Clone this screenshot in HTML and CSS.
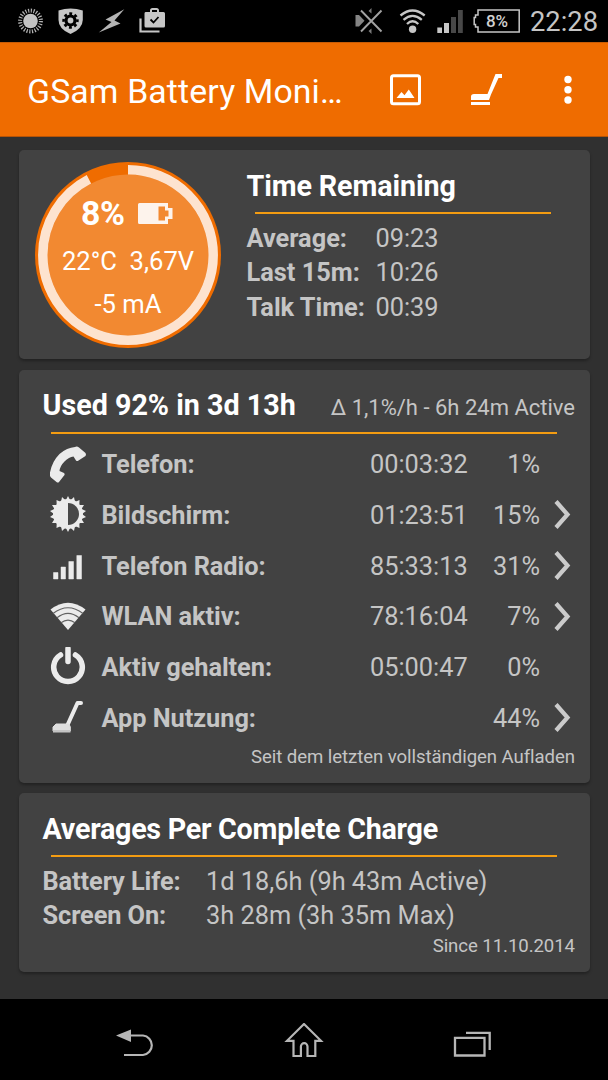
FILE: index.html
```html
<!DOCTYPE html>
<html lang="de">
<head>
  <meta charset="UTF-8">
  <meta name="viewport" content="width=device-width, initial-scale=1.0">
  <title>GSam Battery Monitor</title>
  <link rel="stylesheet" href="styles.css">
</head>
<body>
  <div class="screen">
    <!-- Status bar -->
    <div class="status-bar">
      <svg class="status-icons-left" width="170" height="42" viewBox="0 0 170 42">
        <circle cx="30.5" cy="21" r="7.3" fill="#c4c4c4"/>
        <circle cx="30.5" cy="21" r="10.4" fill="none" stroke="#b4b4b4" stroke-width="4" stroke-dasharray="1.2 1.52"/>
        <path d="M58.5 10.5Q70.5 6.5 82.800 10.500V20Q82.500 29 70.500 34Q58.500 29 58.500 20Z" fill="#c6c6c6"/>
        <circle cx="70.500" cy="20.500" r="4.500" fill="none" stroke="#000" stroke-width="3.200"/>
        <circle cx="70.500" cy="20.500" r="6.900" fill="none" stroke="#000" stroke-width="2.600" stroke-dasharray="2.900 2.519" stroke-dashoffset="1.450"/>
        <path d="M124.300 9.300L105.500 19.500L111.500 22L98.800 32.500L120.500 23.500L114.500 20.500Z" fill="#b4b4b4"/>
        <path d="M145.500 12H150V10.500Q150 8 152.500 8H156.500Q159 8 159 10.500V12H163.500Q165 12 165 13.500V26Q165 27.500 163.500 27.500H146Q144.500 27.500 144.500 26V13.500Q144.500 12 145.500 12ZM152 12H157V10H152Z" fill="#c6c6c6" fill-rule="evenodd"/>
        <path d="M150.500 19.500L153.500 22.500L158.500 17" fill="none" stroke="#000" stroke-width="1.800"/>
        <path d="M140.500 18.500V31.500H159.500" fill="none" stroke="#c6c6c6" stroke-width="2.200"/>
      </svg>
      <svg class="status-icons-right" width="112" height="42" viewBox="0 0 112 42">
        <path d="M3.500 15H7L12.500 20.800L7 26.500H3.500Z" fill="#858585"/>
        <path d="M19.500 8V13.500L16.500 11ZM19.500 34V28.500L16.500 31Z" fill="#7b7b7b"/>
        <path d="M9 10.500L29.500 31.500M29.500 10.500L9 31.500" stroke="#a2a2a2" stroke-width="1.900"/>
        <g fill="none" stroke="#c6c6c6" stroke-width="2.300">
          <path d="M48.500 15.500Q60.500 5.500 72.700 15.500"/>
          <path d="M51.500 19.800Q60.500 12 69.800 19.800"/>
          <path d="M55 24Q60.500 18.500 66.300 24"/>
        </g>
        <circle cx="60.600" cy="29.200" r="3.700" fill="#c6c6c6"/>
        <path d="M85.300 27.500H90V33H85.300ZM92 23H97V33H92Z" fill="#c6c6c6"/>
        <path d="M99 17H104V33H99ZM106 10H110.800V33H106Z" fill="#484848"/>
      </svg>
      <div class="status-battery">
        <svg width="48" height="26" viewBox="0 0 48 26">
          <path d="M5 2H46.200V24H5V19H2.500V16.500H1.200V9.500H2.500V7H5Z" fill="none" stroke="#c6c6c6" stroke-width="1.500"/>
        </svg>
        <span class="status-battery-text">8%</span>
      </div>
      <span class="clock">22:28</span>
    </div>

    <!-- App bar -->
    <div class="app-bar">
      <h1>GSam Battery Moni…</h1>
      <svg class="action" width="32" height="32" viewBox="0 0 32 32">
        <rect x="1.500" y="1.700" width="28" height="28" rx="2" fill="none" stroke="#fff" stroke-width="3"/>
        <path d="M6.500 24L11.500 18L14.500 21.300L18.800 15.500L24.500 24Z" fill="#fff"/>
      </svg>
      <svg class="action-broom" width="32" height="32" viewBox="0 0 32 32">
        <path d="M31 0H24.500L16.500 20H3Q0 20 0 22.500V26H18L20 20.500L27.500 4H31ZM0 28H19V31H0Z" fill="#fff"/>
      </svg>
      <svg class="action-more" width="8" height="30" viewBox="0 0 8 30">
        <circle cx="4" cy="4.500" r="3.700" fill="#fff"/>
        <circle cx="4" cy="14.700" r="3.700" fill="#fff"/>
        <circle cx="4" cy="25" r="3.700" fill="#fff"/>
      </svg>
    </div>

    <div class="content">
      <!-- Battery gauge and time remaining -->
      <div class="card card-remaining">
        <div class="gauge">
          <svg class="gauge-ring" width="188" height="188" viewBox="0 0 188 188">
            <circle cx="94" cy="94" r="93" fill="#ef6c00"/>
            <circle cx="94" cy="94" r="80.500" fill="#f28931"/>
            <circle cx="94" cy="94" r="85.200" fill="none" stroke="#fde3cf" stroke-width="9.500" pathLength="100" stroke-dasharray="92.400 7.600" transform="rotate(-90 94 94)"/>
          </svg>
          <div class="gauge-level">
            <span>8%</span>
            <svg width="35" height="22" viewBox="0 0 35 22">
              <path d="M1.500 0H30V5H34.500V16H30V21H1.500Q0 21 0 19.500V1.500Q0 0 1.500 0ZM20.500 3.500V17.500H27V13.500H30.500V7.500H27V3.500Z" fill="#fdf3ec" fill-rule="evenodd"/>
            </svg>
          </div>
          <div class="gauge-line">22°C&nbsp; 3,67V</div>
          <div class="gauge-line gauge-current">-5 mA</div>
        </div>
        <div class="remaining">
          <h2>Time Remaining</h2>
          <div class="rule"></div>
          <div class="pair"><b>Average:</b><span>09:23</span></div>
          <div class="pair"><b>Last 15m:</b><span>10:26</span></div>
          <div class="pair"><b>Talk Time:</b><span>00:39</span></div>
        </div>
      </div>

      <!-- Usage -->
      <div class="card card-usage">
        <div class="card-head">
          <h2>Used 92% in 3d 13h</h2>
          <span class="rate">Δ 1,1%/h - 6h 24m Active</span>
        </div>
        <div class="rule"></div>
        <div class="usage-row">
          <svg class="usage-icon" width="40" height="40" viewBox="0 0 40 40">
            <path d="M27 2Q29 1 31 2.500L37.500 8Q38.500 9.500 37.500 11L30.500 15.500Q29 16.500 28 15.500L25.500 11.500Q21 12 16.500 16.500Q12 21 11.500 26L16 28Q17 29 16.500 30L11 37Q10 38 8.500 37L3 32.500Q1.500 31 2 27.500Q4 16.500 11.500 9Q19 2.500 27 2Z" fill="#ebebeb"/>
          </svg>
          <b>Telefon:</b><span class="time">00:03:32</span><span class="percent">1%</span>
        </div>
        <div class="usage-row">
          <svg class="usage-icon" width="40" height="40" viewBox="0 0 40 40">
            <circle cx="20" cy="19" r="15" fill="#ebebeb"/>
            <path d="M20 1L22.300 5.500L26 2L27 7L31.500 5L31.300 10L36 10L33.500 14L38 16L34 19L38 22L33.500 24L36 28L31.300 28L31.500 33L27 31L26 36L22.300 32.500L20 37L17.700 32.500L14 36L13 31L8.500 33L8.700 28L4 28L6.500 24L2 22L6 19L2 16L6.500 14L4 10L8.700 10L8.500 5L13 7L14 2L17.700 5.500Z" fill="#ebebeb"/>
            <path d="M20 8A11 11 0 0 1 20 30Z" fill="#484848"/>
          </svg>
          <b>Bildschirm:</b><span class="time">01:23:51</span><span class="percent">15%</span>
          <svg class="chevron" width="20" height="32" viewBox="0 0 20 32"><path d="M3 2.500L14.500 15.500L3 28.500" /></svg>
        </div>
        <div class="usage-row">
          <svg class="usage-icon" width="40" height="40" viewBox="0 0 40 40">
            <path d="M5.500 26.500H10V33H5.500ZM13 21H17.500V33H13ZM20.800 15.500H25.500V33H20.800ZM28.800 9.500H33.500V33H28.800Z" fill="#ebebeb" stroke="#ebebeb" stroke-width=".5" stroke-linejoin="round"/>
          </svg>
          <b>Telefon Radio:</b><span class="time">85:33:13</span><span class="percent">31%</span>
          <svg class="chevron" width="20" height="32" viewBox="0 0 20 32"><path d="M3 2.500L14.500 15.500L3 28.500" /></svg>
        </div>
        <div class="usage-row">
          <svg class="usage-icon" width="40" height="40" viewBox="0 0 40 40">
            <path d="M2.500 12.500Q20 -1 37.500 12.500L20 33Z" fill="#ebebeb"/>
            <path d="M5 16.500Q20 5 35 16.500M9 20.800Q20 12 31 20.800M13 25.800Q20 20.500 27 25.800" fill="none" stroke="#626262" stroke-width="1.100"/>
          </svg>
          <b>WLAN aktiv:</b><span class="time">78:16:04</span><span class="percent">7%</span>
          <svg class="chevron" width="20" height="32" viewBox="0 0 20 32"><path d="M3 2.500L14.500 15.500L3 28.500" /></svg>
        </div>
        <div class="usage-row">
          <svg class="usage-icon" width="40" height="40" viewBox="0 0 40 40">
            <path d="M12.500 8A14.300 14.300 0 1 0 27.500 8M20 1.500V14.500" fill="none" stroke="#ebebeb" stroke-width="5.500" stroke-linecap="round"/>
          </svg>
          <b>Aktiv gehalten:</b><span class="time">05:00:47</span><span class="percent">0%</span>
        </div>
        <div class="usage-row">
          <svg class="usage-icon" width="40" height="40" viewBox="0 0 40 40">
            <path d="M33 5H29.500L19.500 27" fill="none" stroke="#ebebeb" stroke-width="4" stroke-linecap="round" stroke-linejoin="round"/>
            <path d="M8 26H21L22.300 29V33H5V29Z" fill="#dedede" stroke="#dedede" stroke-linejoin="round"/>
            <path d="M5 32H22.500V34.500H5Z" fill="#c4c4c4"/>
          </svg>
          <b>App Nutzung:</b><span class="time"></span><span class="percent">44%</span>
          <svg class="chevron" width="20" height="32" viewBox="0 0 20 32"><path d="M3 2.500L14.500 15.500L3 28.500" /></svg>
        </div>
        <div class="note">Seit dem letzten vollständigen Aufladen</div>
      </div>

      <!-- Averages -->
      <div class="card card-averages">
        <h2>Averages Per Complete Charge</h2>
        <div class="rule"></div>
        <div class="pair"><b>Battery Life:</b><span>1d 18,6h (9h 43m Active)</span></div>
        <div class="pair"><b>Screen On:</b><span>3h 28m (3h 35m Max)</span></div>
        <div class="note">Since 11.10.2014</div>
      </div>
    </div>

    <!-- Navigation bar -->
    <div class="nav-bar">
      <svg width="40" height="40" viewBox="0 0 40 40">
        <path d="M13 12.500H27A9.800 9.800 0 0 1 27 32H8" fill="none" stroke="#b6b6b6" stroke-width="2.200"/>
        <path d="M0 12.500L15 6.500V19Z" fill="#b6b6b6"/>
      </svg>
      <svg width="40" height="40" viewBox="0 0 40 40">
        <path d="M20 1L37 17.800H31.300V33H23.500V23.500A3.300 3.300 0 0 0 16.900 23.500V33H9.500V17.800H3Z" fill="none" stroke="#b6b6b6" stroke-width="2.200"/>
      </svg>
      <svg width="40" height="40" viewBox="0 0 40 40">
        <path d="M2 14.800H31.500V32.500H2ZM13 9.800H36.700V27" fill="none" stroke="#b6b6b6" stroke-width="2.300"/>
      </svg>
    </div>
  </div>
</body>
</html>
```

FILE: styles.css
```css
* {
  box-sizing: border-box;
}

body {
  font-family: Roboto, "Liberation Sans", sans-serif;
  background: #000;
  margin: 0;
  padding: 0;
  color: #c5c5c5;
  font-size: 25.33px;
}

h1, h2 {
  margin: 0;
}

svg {
  display: block;
  flex-shrink: 0;
}

.screen {
  width: 608px;
  height: 1080px;
  display: flex;
  flex-direction: column;
  overflow: hidden;
}

/* Status bar */
.status-bar {
  height: 42px;
  display: flex;
  align-items: center;
  padding-right: 10px;
  background: #000;
}

.status-icons-right {
  margin-left: auto;
}

.status-battery {
  position: relative;
  margin-left: 9px;
  width: 48px;
}

.status-battery-text {
  position: absolute;
  top: 0;
  left: 4px;
  width: 40px;
  line-height: 26px;
  font-size: 17px;
  font-weight: 500;
  letter-spacing: -0.2px;
  text-align: center;
  color: #d0d0d0;
}

.clock {
  margin-left: 9px;
  width: 68px;
  font-size: 27.3px;
  line-height: 42px;
  padding-top: 2px;
}

/* App bar */
.app-bar {
  height: 95px;
  display: flex;
  align-items: center;
  padding-left: 27px;
  background: #ef6c00;
  border-top: 1px solid #c75c06;
  border-bottom: 1px solid #b55307;
}

.app-bar h1 {
  width: 363px;
  font-size: 33.8px;
  font-weight: 400;
  line-height: 40px;
  letter-spacing: 0.13px;
  color: #fff;
  white-space: nowrap;
  padding-top: 4px;
}

.action-broom {
  margin-left: 49px;
}

.action-more {
  margin-left: 60.5px;
}

/* Cards */
.content {
  height: 862px;
  padding: 13px 18px 0 18.5px;
  background: #303030;
}

.card {
  background: #424242;
  border-radius: 5px;
  box-shadow: 0 2px 3px rgba(0, 0, 0, 0.3);
  margin-bottom: 10.5px;
}

.card h2 {
  font-size: 28.7px;
  font-weight: 700;
  line-height: 36px;
  color: #fff;
  white-space: nowrap;
}

.rule {
  height: 2px;
  background: #f39c12;
  margin: 0 9px 0 8px;
}

.pair {
  display: flex;
  line-height: 34.6px;
  white-space: nowrap;
}

.note {
  text-align: right;
  font-size: 18.6px;
  line-height: 24px;
  letter-spacing: -0.07px;
}

.card-remaining {
  height: 209px;
  display: flex;
}

.remaining {
  padding: 18px 0 0 24.5px;
  width: 337px;
}

.remaining h2 {
  letter-spacing: -0.1px;
}

.remaining .rule {
  margin: 8px 9px 7.5px 8px;
  width: 296px;
}

.remaining .pair b {
  width: 129px;
}

/* Gauge */
.gauge {
  position: relative;
  width: 188px;
  height: 188px;
  margin: 11px 0 0 15.5px;
  color: #fff;
  text-align: center;
}

.gauge-ring {
  position: absolute;
  top: 0;
  left: 0;
}

.gauge-level,
.gauge-line {
  position: relative;
}

.gauge-level {
  display: flex;
  align-items: center;
  gap: 13px;
  padding: 33px 0 0 47px;
  font-size: 33.8px;
  font-weight: 700;
  line-height: 40px;
}

.gauge-level span {
  letter-spacing: -0.3px;
}

.gauge-line {
  font-size: 25.6px;
  line-height: 30px;
  margin-top: 12px;
}

.gauge-current {
  margin-top: 13px;
}

/* Usage card */
.card-usage {
  height: 413px;
  padding: 17px 15px 0 24px;
}

.card-head {
  display: flex;
  justify-content: space-between;
  align-items: baseline;
  margin-bottom: 9px;
}

.rate {
  font-size: 22px;
  white-space: nowrap;
}

.card-usage .rule {
  margin-right: 18px;
  margin-bottom: 6px;
}

.usage-row {
  display: flex;
  align-items: center;
  height: 50.65px;
  white-space: nowrap;
}

.usage-row b {
  letter-spacing: -0.04px;
}

.usage-icon {
  margin: 0 14px 0 5px;
}

.usage-row .time {
  margin-left: auto;
  width: 98px;
}

.usage-row .percent {
  width: 72px;
  text-align: right;
  margin-right: 35px;
}

.card-usage .note {
  padding-top: 2px;
}

.chevron {
  margin-left: -22px;
  margin-right: 2px;
  filter: blur(0.4px);
}

.chevron path {
  fill: none;
  stroke: #cbcbcb;
  stroke-width: 4.2;
}

/* Averages card */
.card-averages {
  height: 179px;
  padding: 18px 15px 0 24px;
}

.card-averages h2 {
  letter-spacing: -0.26px;
}

.card-averages .rule {
  margin: 8px 18px 7.5px 8px;
}

.card-averages .pair b {
  width: 163.5px;
  letter-spacing: -0.08px;
}

/* Navigation bar */
.nav-bar {
  height: 81px;
  display: flex;
  align-items: center;
  justify-content: center;
  gap: 128.5px;
  padding-top: 7px;
  background: #000;
}
```
